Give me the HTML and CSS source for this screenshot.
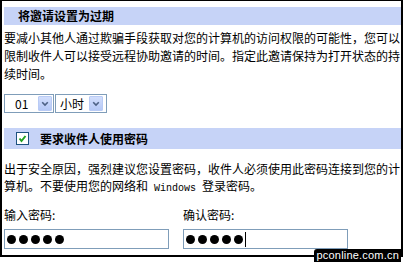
FILE: index.html
```html
<!DOCTYPE html>
<html>
<head>
<meta charset="utf-8">
<link rel="stylesheet" href="styles.css">
</head>
<body>
<div class="frame">
  <div class="content">
    <div class="bar bar1">将邀请设置为过期</div>
    <p class="para p1">要减小其他人通过欺骗手段获取对您的计算机的访问权限的可能性，您可以限制收件人可以接受远程协助邀请的时间。指定此邀请保持为打开状态的持续时间。</p>
    <div class="selects">
      <div class="sel s1"><span class="val">01</span><span class="btn"><svg width="15" height="15" viewBox="0 0 15 15"><path d="M4 6 L7.5 9.5 L11 6" fill="none" stroke="#4d6185" stroke-width="2"/></svg></span></div>
      <div class="sel s2"><span class="val">小时</span><span class="btn"><svg width="15" height="15" viewBox="0 0 15 15"><path d="M4 6 L7.5 9.5 L11 6" fill="none" stroke="#4d6185" stroke-width="2"/></svg></span></div>
    </div>
    <div class="bar bar2">
      <span class="chk"><svg width="11" height="11" viewBox="0 0 11 11"><path d="M2.5 5.5 L4.5 8 L8.5 3" fill="none" stroke="#21a121" stroke-width="2"/></svg></span>
      <span class="bar2-text">要求收件人使用密码</span>
    </div>
    <p class="para p2">出于安全原因，强烈建议您设置密码，收件人必须使用此密码连接到您的计算机。不要使用您的网络和<span class="num">Windows</span>登录密码。</p>
    <div class="fields">
      <div class="field">
        <div class="label">输入密码:</div>
        <div class="pw"><i class="dot"></i><i class="dot"></i><i class="dot"></i><i class="dot"></i><i class="dot"></i></div>
      </div>
      <div class="field">
        <div class="label">确认密码:</div>
        <div class="pw"><i class="dot"></i><i class="dot"></i><i class="dot"></i><i class="dot"></i><i class="dot"></i><i class="caret"></i></div>
      </div>
    </div>
  </div>
  <div class="wm">pconline.com.cn</div>
</div>
</body>
</html>
```

FILE: styles.css
```css
html, body {
  margin: 0;
  padding: 0;
  background: #fff;
}
body {
  width: 403px;
  height: 262px;
  overflow: hidden;
  position: relative;
  font-family: "Noto Sans CJK SC", "Liberation Sans", sans-serif;
  font-size: 12px;
  color: #000;
}
.frame {
  width: 399px;
  height: 254px;
  border-left: 2px solid #000;
  border-right: 2px solid #000;
  border-top: 1px solid #000;
  border-bottom: 2px solid #000;
}
.content {
  padding-left: 2px;
  width: 397px;
}
.bar {
  background: #c6d3f7;
  font-weight: bold;
  display: flex;
  align-items: center;
}
.bar1 {
  margin-top: 6px;
  height: 18px;
  padding-left: 14px;
  line-height: 18px;
}
.para {
  margin: 0;
  line-height: 18px;
}
.p1 {
  margin-top: 4px;
}
.num {
  display: inline-block;
  font-family: "Liberation Mono", monospace;
  font-size: 10px;
  line-height: 12px;
  padding: 0 6px;
}
.selects {
  display: flex;
  gap: 1px;
  margin-top: 11px;
}
.sel {
  box-sizing: border-box;
  height: 19px;
  border: 1px solid #7f9db9;
  padding: 1px;
  display: flex;
  align-items: center;
  justify-content: space-between;
}
.s1 {
  width: 50px;
  padding-left: 10px;
}
.s2 {
  width: 52px;
  padding-left: 4px;
  padding-right: 3px;
}
.val {
  line-height: 15px;
}
.btn {
  width: 14px;
  height: 15px;
  box-sizing: border-box;
  background: linear-gradient(#d2defc, #b5c8f6);
  border: 1px solid #b9cbf5;
  border-radius: 1px;
  display: flex;
  align-items: center;
  justify-content: center;
}
.btn svg {
  display: block;
  width: 12px;
  height: 13px;
}
.bar2 {
  margin-top: 15px;
  height: 21px;
  padding-left: 12px;
  gap: 11px;
}
.chk {
  width: 13px;
  height: 13px;
  box-sizing: border-box;
  border: 1px solid #1c5180;
  background: #fff;
  display: flex;
  align-items: center;
  justify-content: center;
}
.chk svg {
  display: block;
  width: 11px;
  height: 11px;
}
.p2 {
  margin-top: 11px;
  line-height: 17px;
}
.fields {
  display: flex;
  gap: 14px;
  margin-top: 11px;
}
.field {
  width: 165px;
}
.label {
  line-height: 17px;
}
.pw {
  margin-top: 6px;
  box-sizing: border-box;
  height: 20px;
  border: 1px solid #7f9db9;
  display: flex;
  align-items: center;
  padding-left: 2px;
  gap: 3px;
}
.dot {
  width: 9px;
  height: 9px;
  border-radius: 50%;
  background: #000;
}
.caret {
  width: 1px;
  height: 15px;
  background: #000;
  margin-left: -1px;
}
.wm {
  position: absolute;
  right: 2px;
  bottom: 0;
  background: #000;
  color: #fff;
  font-family: "Liberation Sans", sans-serif;
  font-size: 11px;
  line-height: 13px;
  padding: 0 2px 0 3px;
  border-radius: 3px 0 0 0;
  letter-spacing: 0.2px;
}
```
